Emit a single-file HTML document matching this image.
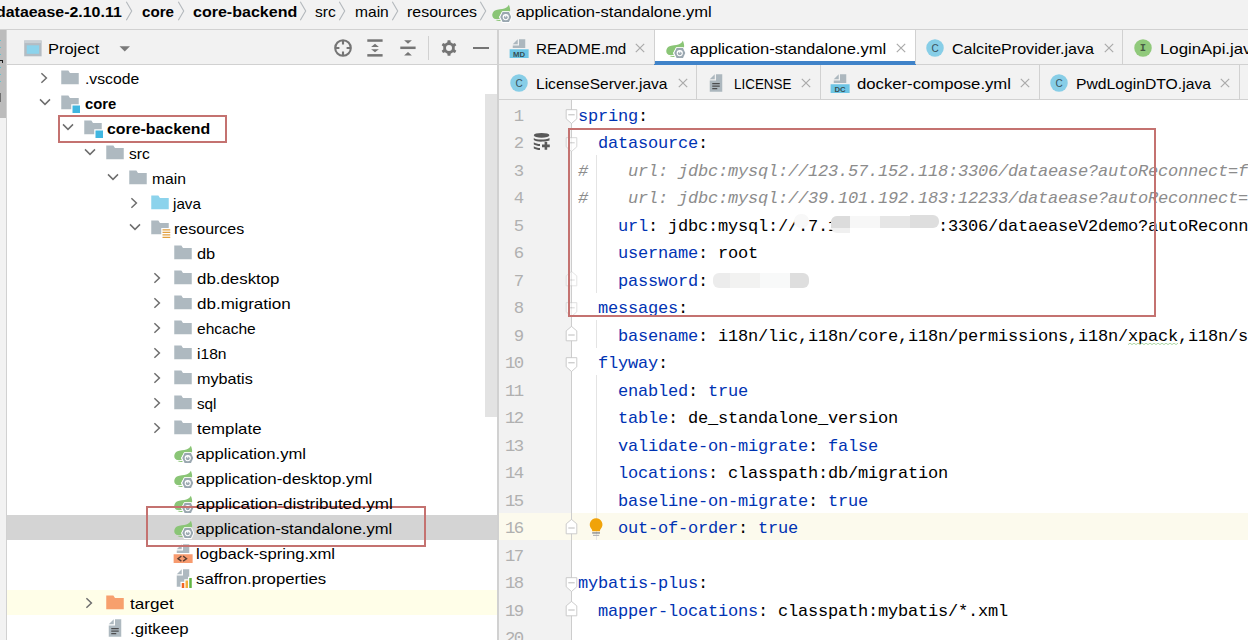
<!DOCTYPE html>
<html><head><meta charset='utf-8'><title>application-standalone.yml</title>
<style>

html,body{margin:0;padding:0}
body{width:1248px;height:640px;overflow:hidden;position:relative;background:#fff;font-family:"Liberation Sans", sans-serif;color:#000}
.a{position:absolute}
.t{position:absolute;white-space:pre;line-height:20px;height:20px;transform-origin:0 50%}
.ln{position:absolute;left:578px;white-space:pre;font-family:"Liberation Mono", monospace;font-size:17px;letter-spacing:-0.2px;line-height:27.5px;height:27.5px;color:#000}
.k{color:#0033b3}
.c{color:#8c8c8c;font-style:italic}
.no{position:absolute;left:499px;width:23.4px;letter-spacing:-1.68px;text-align:right;font-family:"Liberation Mono", monospace;font-size:17.3px;line-height:27.5px;height:27.5px;color:#b0b0b0}
svg{position:absolute;overflow:visible}

</style></head>
<body>
<div class="a" style="left:0px;top:0px;width:1248px;height:29px;background:#f2f2f2;"></div>
<div class="a" style="left:0px;top:29px;width:1248px;height:1px;background:#d1d1d1;"></div>
<div class="a" style="left:0px;top:30px;width:6px;height:610px;background:#f2f2f2;"></div>
<div class="a" style="left:0px;top:30px;width:6.4px;height:87.5px;background:#bcbcbc;"></div>
<div class="a" style="left:0px;top:40px;width:1px;height:1.2px;background:#62c3cf;"></div>
<div class="a" style="left:0px;top:47px;width:1px;height:1.2px;background:#62c3cf;"></div>
<div class="a" style="left:0px;top:54px;width:1px;height:1.2px;background:#62c3cf;"></div>
<div class="a" style="left:0px;top:66.5px;width:1px;height:1.2px;background:#62c3cf;"></div>
<div class="a" style="left:0px;top:73.5px;width:1px;height:1.2px;background:#62c3cf;"></div>
<div class="a" style="left:0px;top:81px;width:1px;height:1.2px;background:#62c3cf;"></div>
<div class="a" style="left:0px;top:60px;width:2.6px;height:1.4px;background:#1a1a1a;"></div>
<div class="a" style="left:1.6px;top:60.6px;width:1.4px;height:2.4px;background:#1a1a1a;"></div>
<div class="a" style="left:0px;top:93px;width:1.2px;height:9px;background:#6e6e6e;"></div>
<div class="a" style="left:6px;top:30px;width:1px;height:610px;background:#d1d1d1;"></div>
<div class="a" style="left:7px;top:30px;width:490px;height:34px;background:#f2f2f2;"></div>
<div class="a" style="left:7px;top:64px;width:490px;height:1px;background:#d1d1d1;"></div>
<div class="a" style="left:7px;top:65px;width:490px;height:575px;background:#fff;"></div>
<div class="a" style="left:7px;top:515px;width:490px;height:25px;background:#d4d4d4;"></div>
<div class="a" style="left:7px;top:590px;width:490px;height:25px;background:#fffee8;"></div>
<div class="a" style="left:485px;top:94px;width:12px;height:323px;background:#e3e3e3;"></div>
<div class="a" style="left:497px;top:30px;width:2px;height:610px;background:#d1d1d1;"></div>
<div class="a" style="left:499px;top:30px;width:749px;height:34px;background:#f2f2f2;"></div>
<div class="a" style="left:499px;top:64px;width:749px;height:1px;background:#d1d1d1;"></div>
<div class="a" style="left:499px;top:65px;width:749px;height:34px;background:#f2f2f2;"></div>
<div class="a" style="left:499px;top:99px;width:749px;height:1px;background:#d1d1d1;"></div>
<div class="a" style="left:654.4px;top:30px;width:261.2px;height:34px;background:#fff;"></div>
<div class="a" style="left:654.4px;top:61.2px;width:261.2px;height:4.2px;background:#4083c9;"></div>
<div class="a" style="left:654px;top:30px;width:1px;height:34px;background:#d1d1d1;"></div>
<div class="a" style="left:915px;top:30px;width:1px;height:34px;background:#d1d1d1;"></div>
<div class="a" style="left:1122px;top:30px;width:1px;height:34px;background:#d1d1d1;"></div>
<div class="a" style="left:696px;top:65px;width:1px;height:34px;background:#d1d1d1;"></div>
<div class="a" style="left:820px;top:65px;width:1px;height:34px;background:#d1d1d1;"></div>
<div class="a" style="left:1039px;top:65px;width:1px;height:34px;background:#d1d1d1;"></div>
<div class="a" style="left:1239px;top:65px;width:1px;height:34px;background:#d1d1d1;"></div>
<div class="a" style="left:499px;top:100px;width:72px;height:540px;background:#f2f2f2;"></div>
<div class="a" style="left:572px;top:100px;width:676px;height:540px;background:#fff;"></div>
<div class="a" style="left:499px;top:512.5px;width:749px;height:27.5px;background:#fcfaed;"></div>
<div class="a" style="left:571px;top:100px;width:1px;height:540px;background:#cdcdcd;"></div>
<div class="no" style="top:102.5px">1</div>
<div class="ln" style="top:102.7px"><span class="k">spring</span>:</div>
<div class="no" style="top:130.0px">2</div>
<div class="ln" style="top:130.2px">  <span class="k">datasource</span>:</div>
<div class="no" style="top:157.5px">3</div>
<div class="ln" style="top:157.7px"><span class="c">#    url: jdbc:mysql://123.57.152.118:3306/dataease?autoReconnect=f</span></div>
<div class="no" style="top:185.0px">4</div>
<div class="ln" style="top:185.2px"><span class="c">#    url: jdbc:mysql://39.101.192.183:12233/dataease?autoReconnect=</span></div>
<div class="no" style="top:212.5px">5</div>
<div class="ln" style="top:212.7px">    <span class="k">url</span>: jdbc:mysql://.7.1          :3306/dataeaseV2demo?autoReconn</div>
<div class="no" style="top:240.0px">6</div>
<div class="ln" style="top:240.2px">    <span class="k">username</span>: root</div>
<div class="no" style="top:267.5px">7</div>
<div class="ln" style="top:267.7px">    <span class="k">password</span>:</div>
<div class="no" style="top:295.0px">8</div>
<div class="ln" style="top:295.2px">  <span class="k">messages</span>:</div>
<div class="no" style="top:322.5px">9</div>
<div class="ln" style="top:322.7px">    <span class="k">basename</span>: i18n/lic,i18n/core,i18n/permissions,i18n/xpack,i18n/s</div>
<div class="no" style="top:350.0px">10</div>
<div class="ln" style="top:350.2px">  <span class="k">flyway</span>:</div>
<div class="no" style="top:377.5px">11</div>
<div class="ln" style="top:377.7px">    <span class="k">enabled</span>: <span class="k">true</span></div>
<div class="no" style="top:405.0px">12</div>
<div class="ln" style="top:405.2px">    <span class="k">table</span>: de_standalone_version</div>
<div class="no" style="top:432.5px">13</div>
<div class="ln" style="top:432.7px">    <span class="k">validate-on-migrate</span>: <span class="k">false</span></div>
<div class="no" style="top:460.0px">14</div>
<div class="ln" style="top:460.2px">    <span class="k">locations</span>: classpath:db/migration</div>
<div class="no" style="top:487.5px">15</div>
<div class="ln" style="top:487.7px">    <span class="k">baseline-on-migrate</span>: <span class="k">true</span></div>
<div class="no" style="top:515.0px">16</div>
<div class="ln" style="top:515.2px">    <span class="k">out-of-order</span>: <span class="k">true</span></div>
<div class="no" style="top:542.5px">17</div>
<div class="no" style="top:570.0px">18</div>
<div class="ln" style="top:570.2px"><span class="k">mybatis-plus</span>:</div>
<div class="no" style="top:597.5px">19</div>
<div class="ln" style="top:597.7px">  <span class="k">mapper-locations</span>: classpath:mybatis/*.xml</div>
<div class="no" style="top:625.0px">20</div>
<svg style="left:59.75px;top:67.75px" width="20" height="20" viewBox="0 0 16 16" ><polygon fill="#9AA7B0" fill-opacity=".8" points="1,13 15,13 15,4 7.985,4 6.696,2 1,2"/></svg>
<svg style="left:38.35px;top:72px" width="12" height="12" viewBox="-6 -6 12 12" ><path d="M-2.6,-4.7 L2.4,0 L-2.6,4.7" fill="none" stroke="#6e6e6e" stroke-width="1.5"/></svg>
<svg style="left:59.75px;top:92.75px" width="20" height="20" viewBox="0 0 16 16" ><path fill="#9AA7B0" fill-opacity=".8" d="M1,2 L6.696,2 L7.985,4 L15,4 L15,9 L9,9 L9,13 L1,13 Z"/><rect x="10" y="10" width="6" height="6" fill="#40B6E0"/></svg>
<svg style="left:38.95px;top:96.2px" width="12" height="12" viewBox="-6 -6 12 12" ><path d="M-5,-2.6 L0,2.4 L5,-2.6" fill="none" stroke="#6e6e6e" stroke-width="1.5"/></svg>
<svg style="left:82.75px;top:117.75px" width="20" height="20" viewBox="0 0 16 16" ><path fill="#9AA7B0" fill-opacity=".8" d="M1,2 L6.696,2 L7.985,4 L15,4 L15,9 L9,9 L9,13 L1,13 Z"/><rect x="10" y="10" width="6" height="6" fill="#40B6E0"/></svg>
<svg style="left:61.95px;top:121.2px" width="12" height="12" viewBox="-6 -6 12 12" ><path d="M-5,-2.6 L0,2.4 L5,-2.6" fill="none" stroke="#6e6e6e" stroke-width="1.5"/></svg>
<svg style="left:104.75px;top:142.75px" width="20" height="20" viewBox="0 0 16 16" ><polygon fill="#9AA7B0" fill-opacity=".8" points="1,13 15,13 15,4 7.985,4 6.696,2 1,2"/></svg>
<svg style="left:83.95px;top:146.2px" width="12" height="12" viewBox="-6 -6 12 12" ><path d="M-5,-2.6 L0,2.4 L5,-2.6" fill="none" stroke="#6e6e6e" stroke-width="1.5"/></svg>
<svg style="left:127.75px;top:167.75px" width="20" height="20" viewBox="0 0 16 16" ><polygon fill="#9AA7B0" fill-opacity=".8" points="1,13 15,13 15,4 7.985,4 6.696,2 1,2"/></svg>
<svg style="left:106.95px;top:171.2px" width="12" height="12" viewBox="-6 -6 12 12" ><path d="M-5,-2.6 L0,2.4 L5,-2.6" fill="none" stroke="#6e6e6e" stroke-width="1.5"/></svg>
<svg style="left:149.75px;top:192.75px" width="20" height="20" viewBox="0 0 16 16" ><polygon fill="#40B6E0" fill-opacity=".6" points="1,13 15,13 15,4 7.985,4 6.696,2 1,2"/></svg>
<svg style="left:128.35px;top:197px" width="12" height="12" viewBox="-6 -6 12 12" ><path d="M-2.6,-4.7 L2.4,0 L-2.6,4.7" fill="none" stroke="#6e6e6e" stroke-width="1.5"/></svg>
<svg style="left:149.75px;top:217.75px" width="20" height="20" viewBox="0 0 16 16" ><path fill="#9AA7B0" fill-opacity=".8" d="M1,2 L6.696,2 L7.985,4 L15,4 L15,8 L9,8 L9,13 L1,13 Z"/><path fill="#E2A040" d="M10,9h6.2v1h-6.2z M10,11h6.2v1h-6.2z M10,13h6.2v1h-6.2z M10,15h6.2v1h-6.2z"/></svg>
<svg style="left:128.95px;top:221.2px" width="12" height="12" viewBox="-6 -6 12 12" ><path d="M-5,-2.6 L0,2.4 L5,-2.6" fill="none" stroke="#6e6e6e" stroke-width="1.5"/></svg>
<svg style="left:172.75px;top:242.75px" width="20" height="20" viewBox="0 0 16 16" ><polygon fill="#9AA7B0" fill-opacity=".8" points="1,13 15,13 15,4 7.985,4 6.696,2 1,2"/></svg>
<svg style="left:172.75px;top:267.75px" width="20" height="20" viewBox="0 0 16 16" ><polygon fill="#9AA7B0" fill-opacity=".8" points="1,13 15,13 15,4 7.985,4 6.696,2 1,2"/></svg>
<svg style="left:151.35px;top:272px" width="12" height="12" viewBox="-6 -6 12 12" ><path d="M-2.6,-4.7 L2.4,0 L-2.6,4.7" fill="none" stroke="#6e6e6e" stroke-width="1.5"/></svg>
<svg style="left:172.75px;top:292.75px" width="20" height="20" viewBox="0 0 16 16" ><polygon fill="#9AA7B0" fill-opacity=".8" points="1,13 15,13 15,4 7.985,4 6.696,2 1,2"/></svg>
<svg style="left:151.35px;top:297px" width="12" height="12" viewBox="-6 -6 12 12" ><path d="M-2.6,-4.7 L2.4,0 L-2.6,4.7" fill="none" stroke="#6e6e6e" stroke-width="1.5"/></svg>
<svg style="left:172.75px;top:317.75px" width="20" height="20" viewBox="0 0 16 16" ><polygon fill="#9AA7B0" fill-opacity=".8" points="1,13 15,13 15,4 7.985,4 6.696,2 1,2"/></svg>
<svg style="left:151.35px;top:322px" width="12" height="12" viewBox="-6 -6 12 12" ><path d="M-2.6,-4.7 L2.4,0 L-2.6,4.7" fill="none" stroke="#6e6e6e" stroke-width="1.5"/></svg>
<svg style="left:172.75px;top:342.75px" width="20" height="20" viewBox="0 0 16 16" ><polygon fill="#9AA7B0" fill-opacity=".8" points="1,13 15,13 15,4 7.985,4 6.696,2 1,2"/></svg>
<svg style="left:151.35px;top:347px" width="12" height="12" viewBox="-6 -6 12 12" ><path d="M-2.6,-4.7 L2.4,0 L-2.6,4.7" fill="none" stroke="#6e6e6e" stroke-width="1.5"/></svg>
<svg style="left:172.75px;top:367.75px" width="20" height="20" viewBox="0 0 16 16" ><polygon fill="#9AA7B0" fill-opacity=".8" points="1,13 15,13 15,4 7.985,4 6.696,2 1,2"/></svg>
<svg style="left:151.35px;top:372px" width="12" height="12" viewBox="-6 -6 12 12" ><path d="M-2.6,-4.7 L2.4,0 L-2.6,4.7" fill="none" stroke="#6e6e6e" stroke-width="1.5"/></svg>
<svg style="left:172.75px;top:392.75px" width="20" height="20" viewBox="0 0 16 16" ><polygon fill="#9AA7B0" fill-opacity=".8" points="1,13 15,13 15,4 7.985,4 6.696,2 1,2"/></svg>
<svg style="left:151.35px;top:397px" width="12" height="12" viewBox="-6 -6 12 12" ><path d="M-2.6,-4.7 L2.4,0 L-2.6,4.7" fill="none" stroke="#6e6e6e" stroke-width="1.5"/></svg>
<svg style="left:172.75px;top:417.75px" width="20" height="20" viewBox="0 0 16 16" ><polygon fill="#9AA7B0" fill-opacity=".8" points="1,13 15,13 15,4 7.985,4 6.696,2 1,2"/></svg>
<svg style="left:151.35px;top:422px" width="12" height="12" viewBox="-6 -6 12 12" ><path d="M-2.6,-4.7 L2.4,0 L-2.6,4.7" fill="none" stroke="#6e6e6e" stroke-width="1.5"/></svg>
<svg style="left:172.75px;top:442.75px" width="20" height="20" viewBox="0 0 16 16" ><path fill="#8AC576" d="M14.3,2.1 C14.9,3.8 15.6,5.6 15.2,7.6 L9,7.6 L6.4,12 L7.2,13.4 C5.6,13.9 4,13.9 2.7,13.4 C1.2,12.6 0.8,11 1.1,9.6 C1.5,7.5 3,6.4 5,6.1 C8,5.7 10.4,5.6 12,4.6 C13,3.9 13.8,3.1 14.3,2.1 Z M3.6,14.3 C5,14.7 6.4,14.6 7.4,14.2 L7.9,15 C6.4,15.5 4.8,15.3 3.6,14.3 Z"/><path fill="#fff" stroke="#fff" stroke-width="1.5" stroke-linejoin="round" d="M9.3,8.05 H14.4 L16.2,12.05 L14.4,16.05 H9.3 L7.4,12.05 Z"/><path fill="#9AA7B0" d="M9.3,8.05 H14.4 L16.2,12.05 L14.4,16.05 H9.3 L7.4,12.05 Z"/><circle cx="11.8" cy="12.05" r="2.5" fill="#fff"/><circle cx="11.8" cy="12.2" r="1.5" fill="#9AA7B0"/><path fill="none" stroke="#fff" stroke-width="0.75" d="M11.8,9.6 V12.2"/></svg>
<svg style="left:172.75px;top:467.75px" width="20" height="20" viewBox="0 0 16 16" ><path fill="#8AC576" d="M14.3,2.1 C14.9,3.8 15.6,5.6 15.2,7.6 L9,7.6 L6.4,12 L7.2,13.4 C5.6,13.9 4,13.9 2.7,13.4 C1.2,12.6 0.8,11 1.1,9.6 C1.5,7.5 3,6.4 5,6.1 C8,5.7 10.4,5.6 12,4.6 C13,3.9 13.8,3.1 14.3,2.1 Z M3.6,14.3 C5,14.7 6.4,14.6 7.4,14.2 L7.9,15 C6.4,15.5 4.8,15.3 3.6,14.3 Z"/><path fill="#fff" stroke="#fff" stroke-width="1.5" stroke-linejoin="round" d="M9.3,8.05 H14.4 L16.2,12.05 L14.4,16.05 H9.3 L7.4,12.05 Z"/><path fill="#9AA7B0" d="M9.3,8.05 H14.4 L16.2,12.05 L14.4,16.05 H9.3 L7.4,12.05 Z"/><circle cx="11.8" cy="12.05" r="2.5" fill="#fff"/><circle cx="11.8" cy="12.2" r="1.5" fill="#9AA7B0"/><path fill="none" stroke="#fff" stroke-width="0.75" d="M11.8,9.6 V12.2"/></svg>
<svg style="left:172.75px;top:492.75px" width="20" height="20" viewBox="0 0 16 16" ><path fill="#8AC576" d="M14.3,2.1 C14.9,3.8 15.6,5.6 15.2,7.6 L9,7.6 L6.4,12 L7.2,13.4 C5.6,13.9 4,13.9 2.7,13.4 C1.2,12.6 0.8,11 1.1,9.6 C1.5,7.5 3,6.4 5,6.1 C8,5.7 10.4,5.6 12,4.6 C13,3.9 13.8,3.1 14.3,2.1 Z M3.6,14.3 C5,14.7 6.4,14.6 7.4,14.2 L7.9,15 C6.4,15.5 4.8,15.3 3.6,14.3 Z"/><path fill="#fff" stroke="#fff" stroke-width="1.5" stroke-linejoin="round" d="M9.3,8.05 H14.4 L16.2,12.05 L14.4,16.05 H9.3 L7.4,12.05 Z"/><path fill="#9AA7B0" d="M9.3,8.05 H14.4 L16.2,12.05 L14.4,16.05 H9.3 L7.4,12.05 Z"/><circle cx="11.8" cy="12.05" r="2.5" fill="#fff"/><circle cx="11.8" cy="12.2" r="1.5" fill="#9AA7B0"/><path fill="none" stroke="#fff" stroke-width="0.75" d="M11.8,9.6 V12.2"/></svg>
<svg style="left:172.75px;top:517.75px" width="20" height="20" viewBox="0 0 16 16" ><path fill="#8AC576" d="M14.3,2.1 C14.9,3.8 15.6,5.6 15.2,7.6 L9,7.6 L6.4,12 L7.2,13.4 C5.6,13.9 4,13.9 2.7,13.4 C1.2,12.6 0.8,11 1.1,9.6 C1.5,7.5 3,6.4 5,6.1 C8,5.7 10.4,5.6 12,4.6 C13,3.9 13.8,3.1 14.3,2.1 Z M3.6,14.3 C5,14.7 6.4,14.6 7.4,14.2 L7.9,15 C6.4,15.5 4.8,15.3 3.6,14.3 Z"/><path fill="#fff" stroke="#fff" stroke-width="1.5" stroke-linejoin="round" d="M9.3,8.05 H14.4 L16.2,12.05 L14.4,16.05 H9.3 L7.4,12.05 Z"/><path fill="#9AA7B0" d="M9.3,8.05 H14.4 L16.2,12.05 L14.4,16.05 H9.3 L7.4,12.05 Z"/><circle cx="11.8" cy="12.05" r="2.5" fill="#fff"/><circle cx="11.8" cy="12.2" r="1.5" fill="#9AA7B0"/><path fill="none" stroke="#fff" stroke-width="0.75" d="M11.8,9.6 V12.2"/></svg>
<svg style="left:172.75px;top:542.75px" width="20" height="20" viewBox="0 0 16 16" ><polygon fill="#9AA7B0" fill-opacity=".8" points="7,1 3,5 7,5"/><path fill="#9AA7B0" fill-opacity=".8" d="M8,1 V6 H3 V8 H13 V1 Z"/><rect x="0.5" y="9" width="15.2" height="7" fill="#F26522" fill-opacity=".65"/><path fill="none" stroke="#231F20" stroke-opacity=".75" stroke-width="1" d="M6.7,10.5 L3.9,12.5 L6.7,14.5 M8.1,10.5 L10.9,12.5 L8.1,14.5"/></svg>
<svg style="left:172.75px;top:567.75px" width="20" height="20" viewBox="0 0 16 16" ><polygon fill="#9AA7B0" fill-opacity=".8" points="7,1 3,5 7,5"/><path fill="#9AA7B0" fill-opacity=".8" d="M8,1 V6 H3 V15 H6 V11 H9 V9 H12 V7 H13 V1 Z"/><rect x="7" y="12" width="2" height="4" fill="#F26522"/><rect x="10" y="10" width="2" height="6" fill="#F4AF3D"/><rect x="13" y="8" width="2" height="8" fill="#62B543"/></svg>
<svg style="left:104.75px;top:592.75px" width="20" height="20" viewBox="0 0 16 16" ><polygon fill="#F26522" fill-opacity=".62" points="1,13 15,13 15,4 7.985,4 6.696,2 1,2"/></svg>
<svg style="left:83.35px;top:597px" width="12" height="12" viewBox="-6 -6 12 12" ><path d="M-2.6,-4.7 L2.4,0 L-2.6,4.7" fill="none" stroke="#6e6e6e" stroke-width="1.5"/></svg>
<svg style="left:104.75px;top:617.75px" width="20" height="20" viewBox="0 0 16 16" ><polygon fill="#9AA7B0" fill-opacity=".8" points="7,1 3,5 7,5"/><polygon fill="#9AA7B0" fill-opacity=".8" points="8,1 8,6 3,6 3,15 13,15 13,1"/><path fill="#231F20" fill-opacity=".7" d="M5,12h4v1H5z M5,10h6v1H5z M5,8h6v1H5z"/></svg>
<svg style="left:124.9px;top:0.3px" width="8" height="22" viewBox="-4 -11 8 22" ><path d="M-2.7,-9.2 L2.7,0 L-2.7,9.2" fill="none" stroke="#b3b8bc" stroke-width="1.1"/></svg>
<svg style="left:176.9px;top:0.3px" width="8" height="22" viewBox="-4 -11 8 22" ><path d="M-2.7,-9.2 L2.7,0 L-2.7,9.2" fill="none" stroke="#b3b8bc" stroke-width="1.1"/></svg>
<svg style="left:299px;top:0.3px" width="8" height="22" viewBox="-4 -11 8 22" ><path d="M-2.7,-9.2 L2.7,0 L-2.7,9.2" fill="none" stroke="#b3b8bc" stroke-width="1.1"/></svg>
<svg style="left:338px;top:0.3px" width="8" height="22" viewBox="-4 -11 8 22" ><path d="M-2.7,-9.2 L2.7,0 L-2.7,9.2" fill="none" stroke="#b3b8bc" stroke-width="1.1"/></svg>
<svg style="left:390.8px;top:0.3px" width="8" height="22" viewBox="-4 -11 8 22" ><path d="M-2.7,-9.2 L2.7,0 L-2.7,9.2" fill="none" stroke="#b3b8bc" stroke-width="1.1"/></svg>
<svg style="left:479px;top:0.3px" width="8" height="22" viewBox="-4 -11 8 22" ><path d="M-2.7,-9.2 L2.7,0 L-2.7,9.2" fill="none" stroke="#b3b8bc" stroke-width="1.1"/></svg>
<svg style="left:490.75px;top:2.0px" width="20" height="20" viewBox="0 0 16 16" ><path fill="#8AC576" d="M14.3,2.1 C14.9,3.8 15.6,5.6 15.2,7.6 L9,7.6 L6.4,12 L7.2,13.4 C5.6,13.9 4,13.9 2.7,13.4 C1.2,12.6 0.8,11 1.1,9.6 C1.5,7.5 3,6.4 5,6.1 C8,5.7 10.4,5.6 12,4.6 C13,3.9 13.8,3.1 14.3,2.1 Z M3.6,14.3 C5,14.7 6.4,14.6 7.4,14.2 L7.9,15 C6.4,15.5 4.8,15.3 3.6,14.3 Z"/><path fill="#fff" stroke="#fff" stroke-width="1.5" stroke-linejoin="round" d="M9.3,8.05 H14.4 L16.2,12.05 L14.4,16.05 H9.3 L7.4,12.05 Z"/><path fill="#9AA7B0" d="M9.3,8.05 H14.4 L16.2,12.05 L14.4,16.05 H9.3 L7.4,12.05 Z"/><circle cx="11.8" cy="12.05" r="2.5" fill="#fff"/><circle cx="11.8" cy="12.2" r="1.5" fill="#9AA7B0"/><path fill="none" stroke="#fff" stroke-width="0.75" d="M11.8,9.6 V12.2"/></svg>
<svg style="left:23px;top:38px" width="22" height="20" viewBox="0 0 22 20" ><rect x="1.2" y="2.5" width="17.4" height="15.8" fill="#b3bcc3"/><rect x="1.2" y="2.5" width="17.4" height="2.6" fill="#c9d0d5"/><rect x="3.7" y="7.3" width="12.4" height="8.5" fill="#8cd3ec"/></svg>
<svg style="left:118px;top:44.2px" width="14" height="10" viewBox="0 0 14 10" ><path d="M1.5,2.2 H12 L6.75,7.6 Z" fill="#7a7a7a"/></svg>
<svg style="left:333px;top:38px" width="20" height="20" viewBox="-10 -10 20 20" ><g fill="none" stroke="#757575" stroke-width="2.1"><circle r="7.8"/><path d="M0,-8 V-3.6 M0,8 V3.6 M-8,0 H-3.6 M8,0 H3.6"/></g></svg>
<svg style="left:365px;top:38px" width="20" height="20" viewBox="-10 -10 20 20" ><g fill="#757575"><rect x="-7.7" y="-8.7" width="15.3" height="2.5"/><rect x="-7.7" y="6.1" width="15.3" height="2.5"/><path d="M0,-4.3 L3.9,-1 H-3.9 Z M0,4.3 L3.9,1.2 H-3.9 Z"/></g></svg>
<svg style="left:398px;top:38px" width="20" height="20" viewBox="-10 -10 20 20" ><g fill="#757575"><rect x="-7.7" y="-1.45" width="15.3" height="2.5"/><path d="M0,-4.2 L3.9,-7.7 H-3.9 Z M0,4 L3.9,7.6 H-3.9 Z"/></g></svg>
<div class="a" style="left:428px;top:36px;width:1px;height:24px;background:#d1d1d1;"></div>
<svg style="left:439px;top:38px" width="20" height="20" viewBox="-10 -10 20 20" ><path fill="#757575" fill-rule="evenodd" d="M-1.38,-7.68 L1.38,-7.68 L1.65,-5.67 L4.08,-4.26 L5.96,-5.03 L7.34,-2.64 L5.73,-1.41 L5.73,1.41 L7.34,2.64 L5.96,5.03 L4.08,4.26 L1.65,5.67 L1.38,7.68 L-1.38,7.68 L-1.65,5.67 L-4.08,4.26 L-5.96,5.03 L-7.34,2.64 L-5.73,1.41 L-5.73,-1.41 L-7.34,-2.64 L-5.96,-5.03 L-4.08,-4.26 L-1.65,-5.67 Z M3.0,0 A3.0,3.0 0 1 0 -3.0,0 A3.0,3.0 0 1 0 3.0,0 Z"/></svg>
<div class="a" style="left:473.2px;top:46.5px;width:15.4px;height:2.6px;background:#757575;"></div>
<svg style="left:509.4px;top:38px" width="20" height="20" viewBox="0 0 16 16" ><polygon fill="#9AA7B0" fill-opacity=".8" points="7,1 3,5 7,5"/><path fill="#9AA7B0" fill-opacity=".8" d="M8,1 V6 H3 V8 H13 V1 Z"/><rect x="0.5" y="9" width="15.2" height="7" fill="#40B6E0" fill-opacity=".75"/><text x="8.1" y="15.2" text-anchor="middle" font-family="Liberation Sans, sans-serif" font-weight="700" font-size="6.2" fill="#231F20" fill-opacity=".75">MD</text></svg>
<svg style="left:665.0px;top:37.6px" width="20" height="20" viewBox="0 0 16 16" ><path fill="#8AC576" d="M14.3,2.1 C14.9,3.8 15.6,5.6 15.2,7.6 L9,7.6 L6.4,12 L7.2,13.4 C5.6,13.9 4,13.9 2.7,13.4 C1.2,12.6 0.8,11 1.1,9.6 C1.5,7.5 3,6.4 5,6.1 C8,5.7 10.4,5.6 12,4.6 C13,3.9 13.8,3.1 14.3,2.1 Z M3.6,14.3 C5,14.7 6.4,14.6 7.4,14.2 L7.9,15 C6.4,15.5 4.8,15.3 3.6,14.3 Z"/><path fill="#fff" stroke="#fff" stroke-width="1.5" stroke-linejoin="round" d="M9.3,8.05 H14.4 L16.2,12.05 L14.4,16.05 H9.3 L7.4,12.05 Z"/><path fill="#9AA7B0" d="M9.3,8.05 H14.4 L16.2,12.05 L14.4,16.05 H9.3 L7.4,12.05 Z"/><circle cx="11.8" cy="12.05" r="2.5" fill="#fff"/><circle cx="11.8" cy="12.2" r="1.5" fill="#9AA7B0"/><path fill="none" stroke="#fff" stroke-width="0.75" d="M11.8,9.6 V12.2"/></svg>
<svg style="left:925.0px;top:38px" width="20" height="20" viewBox="0 0 16 16" ><circle cx="8" cy="8" r="7" fill="#40B6E0" fill-opacity=".6"/><text x="8" y="10.8" text-anchor="middle" font-family="Liberation Sans, sans-serif" font-size="8.0" fill="#2f3f4a" stroke="#2f3f4a" stroke-width=".12" fill-opacity=".85" stroke-opacity=".85">C</text></svg>
<svg style="left:1132.8px;top:38px" width="20" height="20" viewBox="0 0 16 16" ><circle cx="8" cy="8" r="7" fill="#62B543" fill-opacity=".68"/><text x="8" y="10.6" text-anchor="middle" font-family="Liberation Mono, monospace" font-weight="700" font-size="8.4" fill="#3d4d3d" fill-opacity=".9">I</text></svg>
<svg style="left:508.9px;top:73px" width="20" height="20" viewBox="0 0 16 16" ><circle cx="8" cy="8" r="7" fill="#40B6E0" fill-opacity=".6"/><text x="8" y="10.8" text-anchor="middle" font-family="Liberation Sans, sans-serif" font-size="8.0" fill="#2f3f4a" stroke="#2f3f4a" stroke-width=".12" fill-opacity=".85" stroke-opacity=".85">C</text></svg>
<svg style="left:706.0px;top:73px" width="20" height="20" viewBox="0 0 16 16" ><polygon fill="#9AA7B0" fill-opacity=".8" points="7,1 3,5 7,5"/><polygon fill="#9AA7B0" fill-opacity=".8" points="8,1 8,6 3,6 3,15 13,15 13,1"/><path fill="#231F20" fill-opacity=".7" d="M5,12h4v1H5z M5,10h6v1H5z M5,8h6v1H5z"/></svg>
<svg style="left:830.4px;top:73px" width="20" height="20" viewBox="0 0 16 16" ><polygon fill="#9AA7B0" fill-opacity=".8" points="7,1 3,5 7,5"/><path fill="#9AA7B0" fill-opacity=".8" d="M8,1 V6 H3 V8 H13 V1 Z"/><rect x="0.5" y="9" width="15.2" height="7" fill="#40B6E0" fill-opacity=".75"/><text x="8.1" y="15.2" text-anchor="middle" font-family="Liberation Sans, sans-serif" font-weight="700" font-size="6.2" fill="#231F20" fill-opacity=".75">DC</text></svg>
<svg style="left:1049.0px;top:73px" width="20" height="20" viewBox="0 0 16 16" ><circle cx="8" cy="8" r="7" fill="#40B6E0" fill-opacity=".6"/><text x="8" y="10.8" text-anchor="middle" font-family="Liberation Sans, sans-serif" font-size="8.0" fill="#2f3f4a" stroke="#2f3f4a" stroke-width=".12" fill-opacity=".85" stroke-opacity=".85">C</text></svg>
<svg style="left:634px;top:42.2px" width="12" height="12" viewBox="-6 -6 12 12" ><path d="M-4.2,-4.2 L4.2,4.2 M4.2,-4.2 L-4.2,4.2" fill="none" stroke="#aaaaaa" stroke-width="1.2"/></svg>
<svg style="left:895px;top:42.2px" width="12" height="12" viewBox="-6 -6 12 12" ><path d="M-4.2,-4.2 L4.2,4.2 M4.2,-4.2 L-4.2,4.2" fill="none" stroke="#aaaaaa" stroke-width="1.2"/></svg>
<svg style="left:1103px;top:42.2px" width="12" height="12" viewBox="-6 -6 12 12" ><path d="M-4.2,-4.2 L4.2,4.2 M4.2,-4.2 L-4.2,4.2" fill="none" stroke="#aaaaaa" stroke-width="1.2"/></svg>
<svg style="left:677px;top:77.2px" width="12" height="12" viewBox="-6 -6 12 12" ><path d="M-4.2,-4.2 L4.2,4.2 M4.2,-4.2 L-4.2,4.2" fill="none" stroke="#aaaaaa" stroke-width="1.2"/></svg>
<svg style="left:799.8px;top:77.2px" width="12" height="12" viewBox="-6 -6 12 12" ><path d="M-4.2,-4.2 L4.2,4.2 M4.2,-4.2 L-4.2,4.2" fill="none" stroke="#aaaaaa" stroke-width="1.2"/></svg>
<svg style="left:1019px;top:77.2px" width="12" height="12" viewBox="-6 -6 12 12" ><path d="M-4.2,-4.2 L4.2,4.2 M4.2,-4.2 L-4.2,4.2" fill="none" stroke="#aaaaaa" stroke-width="1.2"/></svg>
<svg style="left:1219px;top:77.2px" width="12" height="12" viewBox="-6 -6 12 12" ><path d="M-4.2,-4.2 L4.2,4.2 M4.2,-4.2 L-4.2,4.2" fill="none" stroke="#aaaaaa" stroke-width="1.2"/></svg>
<div class="a" style="left:596px;top:155.0px;width:1px;height:137.5px;background:#e4e4e4;"></div>
<div class="a" style="left:596px;top:320.0px;width:1px;height:27.5px;background:#e4e4e4;"></div>
<div class="a" style="left:596px;top:375.0px;width:1px;height:165.0px;background:#e4e4e4;"></div>
<svg style="left:565px;top:108.0px" width="13" height="17" viewBox="-6.5 0 13 17" ><g opacity="1"><path d="M-5.3,1.7 H5.3 V10.8 L0,15.5 L-5.3,10.8 Z" fill="#fff" stroke="#c6c6c6" stroke-width=".9"/><path d="M-3.2,6.8 H3.2" stroke="#b4b4b4" stroke-width=".9"/></g></svg>
<svg style="left:565px;top:135.5px" width="13" height="17" viewBox="-6.5 0 13 17" ><g opacity="0.75"><path d="M-5.3,1.7 H5.3 V10.8 L0,15.5 L-5.3,10.8 Z" fill="#fff" stroke="#c6c6c6" stroke-width=".9"/><path d="M-3.2,6.8 H3.2" stroke="#b4b4b4" stroke-width=".9"/></g></svg>
<svg style="left:565px;top:270.0px" width="13" height="17" viewBox="-6.5 0 13 17" ><g opacity="0.5"><path d="M-5.3,15.8 H5.3 V5.9 L0,1.4 L-5.3,5.9 Z" fill="#fff" stroke="#c6c6c6" stroke-width=".9"/><path d="M-3.2,10 H3.2" stroke="#b4b4b4" stroke-width=".9"/></g></svg>
<svg style="left:565px;top:300.5px" width="13" height="17" viewBox="-6.5 0 13 17" ><g opacity="0.6"><path d="M-5.3,1.7 H5.3 V10.8 L0,15.5 L-5.3,10.8 Z" fill="#fff" stroke="#c6c6c6" stroke-width=".9"/><path d="M-3.2,6.8 H3.2" stroke="#b4b4b4" stroke-width=".9"/></g></svg>
<svg style="left:565px;top:325.0px" width="13" height="17" viewBox="-6.5 0 13 17" ><g opacity="1"><path d="M-5.3,15.8 H5.3 V5.9 L0,1.4 L-5.3,5.9 Z" fill="#fff" stroke="#c6c6c6" stroke-width=".9"/><path d="M-3.2,10 H3.2" stroke="#b4b4b4" stroke-width=".9"/></g></svg>
<svg style="left:565px;top:355.5px" width="13" height="17" viewBox="-6.5 0 13 17" ><g opacity="1"><path d="M-5.3,1.7 H5.3 V10.8 L0,15.5 L-5.3,10.8 Z" fill="#fff" stroke="#c6c6c6" stroke-width=".9"/><path d="M-3.2,6.8 H3.2" stroke="#b4b4b4" stroke-width=".9"/></g></svg>
<svg style="left:565px;top:517.5px" width="13" height="17" viewBox="-6.5 0 13 17" ><g opacity="1"><path d="M-5.3,15.8 H5.3 V5.9 L0,1.4 L-5.3,5.9 Z" fill="#fff" stroke="#c6c6c6" stroke-width=".9"/><path d="M-3.2,10 H3.2" stroke="#b4b4b4" stroke-width=".9"/></g></svg>
<svg style="left:565px;top:575.5px" width="13" height="17" viewBox="-6.5 0 13 17" ><g opacity="1"><path d="M-5.3,1.7 H5.3 V10.8 L0,15.5 L-5.3,10.8 Z" fill="#fff" stroke="#c6c6c6" stroke-width=".9"/><path d="M-3.2,6.8 H3.2" stroke="#b4b4b4" stroke-width=".9"/></g></svg>
<svg style="left:565px;top:600.0px" width="13" height="17" viewBox="-6.5 0 13 17" ><g opacity="1"><path d="M-5.3,15.8 H5.3 V5.9 L0,1.4 L-5.3,5.9 Z" fill="#fff" stroke="#c6c6c6" stroke-width=".9"/><path d="M-3.2,10 H3.2" stroke="#b4b4b4" stroke-width=".9"/></g></svg>
<svg style="left:532px;top:132px" width="20" height="20" viewBox="0 0 20 20" ><g fill="#595959"><ellipse cx="9.6" cy="3.3" rx="7.8" ry="2.4"/><path d="M1.8,6 C4,8 14,8 17.5,6 V8.4 C15,9.4 12,9.6 11,9.6 V9.6 H10.5 C7,9.8 3.5,9.2 1.8,8 Z"/><path d="M1.8,10.2 C3,11.3 6,11.9 8,12 V14 C6,13.9 3,13.3 1.8,12.4 Z"/><path d="M1.8,14.3 C3,15.4 6,16 8,16.1 V18.1 C6,18 3,17.4 1.8,16.5 Z"/><path d="M12.6,10 H15.2 V12.6 H17.8 V15.2 H15.2 V17.8 H12.6 V15.2 H10 V12.6 H12.6 Z"/></g></svg>
<svg style="left:586px;top:514.5px" width="20" height="24" viewBox="0 0 20 24" ><path fill="#F0A30A" d="M10.1,3.3 a6.3,6.3 0 0 1 4.6,10.6 c-0.6,0.7 -0.7,1.4 -0.7,2.4 H6.2 c0,-1 -0.1,-1.7 -0.7,-2.4 A6.3,6.3 0 0 1 10.1,3.3 Z"/><rect x="6.2" y="17.4" width="7.8" height="1.1" fill="#6e6e6e"/><rect x="7" y="19.8" width="6.2" height="1.1" fill="#b0b0b0"/></svg>
<div class="a" style="left:794px;top:214px;width:15.200000000000045px;height:14px;background:#f8f8f8;border-radius:7px"></div>
<div class="a" style="left:831.2px;top:215.8px;width:18.799999999999955px;height:17.19999999999999px;background:#f0f0f0;border-radius:6px 0 0 6px"></div>
<div class="a" style="left:831.2px;top:215.8px;width:18.799999999999955px;height:12.0px;background:#dcdcdc;border-radius:6px 0 0 0"></div>
<div class="a" style="left:850px;top:215.8px;width:29.5px;height:12.0px;background:#f7f7f7;border-radius:0"></div>
<div class="a" style="left:879.5px;top:215.8px;width:30.299999999999955px;height:12.0px;background:#e6e6e6;border-radius:0"></div>
<div class="a" style="left:909.8px;top:215.4px;width:29.600000000000023px;height:12.400000000000006px;background:#dedede;border-radius:0 6px 6px 0"></div>
<div class="a" style="left:713px;top:273px;width:17px;height:15px;background:#ececec;border-radius:6px 0 0 6px"></div>
<div class="a" style="left:730px;top:273px;width:30px;height:15px;background:#f2f2f1;border-radius:0"></div>
<div class="a" style="left:760px;top:273px;width:30px;height:15px;background:#f8f9f9;border-radius:0"></div>
<div class="a" style="left:790px;top:273px;width:18.799999999999955px;height:15px;background:#dedede;border-radius:0 6px 6px 0"></div>
<svg style="left:0px;top:0px" width="1248" height="640" viewBox="0 0 1248 640" ><polyline points="1128,344.6 1130,343.2 1132,344.6 1134,343.2 1136,344.6 1138,343.2 1140,344.6 1142,343.2 1144,344.6 1146,343.2 1148,344.6 1150,343.2 1152,344.6 1154,343.2 1156,344.6 1158,343.2 1160,344.6 1162,343.2 1164,344.6 1166,343.2 1168,344.6 1170,343.2 1172,344.6 1174,343.2 1176,344.6 1178,343.2" fill="none" stroke="#a6d19c" stroke-width="0.9"/></svg>
<div class="a" style="left:58px;top:114.5px;width:164.5px;height:24.5px;border:2px solid #c47270"></div>
<div class="a" style="left:146px;top:506px;width:276px;height:37px;border:2px solid #c47270"></div>
<div class="a" style="left:568px;top:128px;width:584px;height:185px;border:2px solid #c47270"></div>
<span class="t" style="left:-4px;top:1.8px;font-size:15px;transform:scaleX(1.0617);font-weight:700;">dataease-2.10.11</span>
<span class="t" style="left:141.5px;top:1.8px;font-size:15px;transform:scaleX(1.0099);font-weight:700;">core</span>
<span class="t" style="left:193.25px;top:1.8px;font-size:15px;transform:scaleX(1.0687);font-weight:700;">core-backend</span>
<span class="t" style="left:315px;top:1.8px;font-size:15px;transform:scaleX(1.0375);">src</span>
<span class="t" style="left:354.5px;top:1.8px;font-size:15px;transform:scaleX(1.0380);">main</span>
<span class="t" style="left:406.5px;top:1.8px;font-size:15px;transform:scaleX(1.0629);">resources</span>
<span class="t" style="left:515.75px;top:1.8px;font-size:15px;transform:scaleX(1.1021);">application-standalone.yml</span>
<span class="t" style="left:48.25px;top:38.8px;font-size:15px;transform:scaleX(1.0977);">Project</span>
<span class="t" style="left:85px;top:69.05px;font-size:15px;transform:scaleX(1.0493);">.vscode</span>
<span class="t" style="left:85px;top:94.05px;font-size:15px;transform:scaleX(0.9862);font-weight:700;">core</span>
<span class="t" style="left:106.75px;top:119.05px;font-size:15px;transform:scaleX(1.0585);font-weight:700;">core-backend</span>
<span class="t" style="left:129.25px;top:144.05px;font-size:15px;transform:scaleX(1.0375);">src</span>
<span class="t" style="left:151.5px;top:169.05px;font-size:15px;transform:scaleX(1.0457);">main</span>
<span class="t" style="left:173.25px;top:194.05px;font-size:15px;transform:scaleX(1.0170);">java</span>
<span class="t" style="left:174.25px;top:219.05px;font-size:15px;transform:scaleX(1.0667);">resources</span>
<span class="t" style="left:196.75px;top:244.05px;font-size:15px;transform:scaleX(1.0936);">db</span>
<span class="t" style="left:196.75px;top:269.05px;font-size:15px;transform:scaleX(1.1241);">db.desktop</span>
<span class="t" style="left:196.75px;top:294.05px;font-size:15px;transform:scaleX(1.1357);">db.migration</span>
<span class="t" style="left:196.75px;top:319.05px;font-size:15px;transform:scaleX(1.0358);">ehcache</span>
<span class="t" style="left:196.75px;top:344.05px;font-size:15px;transform:scaleX(1.0402);">i18n</span>
<span class="t" style="left:196.75px;top:369.05px;font-size:15px;transform:scaleX(1.0786);">mybatis</span>
<span class="t" style="left:196.75px;top:394.05px;font-size:15px;transform:scaleX(1.0163);">sql</span>
<span class="t" style="left:196.75px;top:419.05px;font-size:15px;transform:scaleX(1.1208);">template</span>
<span class="t" style="left:196.25px;top:444.05px;font-size:15px;transform:scaleX(1.1087);">application.yml</span>
<span class="t" style="left:196.25px;top:469.05px;font-size:15px;transform:scaleX(1.1244);">application-desktop.yml</span>
<span class="t" style="left:196.25px;top:494.05px;font-size:15px;transform:scaleX(1.1345);">application-distributed.yml</span>
<span class="t" style="left:196.25px;top:519.05px;font-size:15px;transform:scaleX(1.1050);">application-standalone.yml</span>
<span class="t" style="left:196.25px;top:544.05px;font-size:15px;transform:scaleX(1.1120);">logback-spring.xml</span>
<span class="t" style="left:196.25px;top:569.05px;font-size:15px;transform:scaleX(1.1183);">saffron.properties</span>
<span class="t" style="left:129.7px;top:594.05px;font-size:15px;transform:scaleX(1.1392);">target</span>
<span class="t" style="left:129.7px;top:619.05px;font-size:15px;transform:scaleX(1.1171);">.gitkeep</span>
<span class="t" style="left:535.75px;top:38.8px;font-size:15px;transform:scaleX(1.0119);">README.md</span>
<span class="t" style="left:690.25px;top:38.8px;font-size:15px;transform:scaleX(1.1050);">application-standalone.yml</span>
<span class="t" style="left:951.5px;top:38.8px;font-size:15px;transform:scaleX(1.0712);">CalciteProvider.java</span>
<span class="t" style="left:1159.9px;top:38.8px;font-size:15px;transform:scaleX(1.1196);">LoginApi.java</span>
<span class="t" style="left:535.75px;top:73.8px;font-size:15px;transform:scaleX(1.0375);">LicenseServer.java</span>
<span class="t" style="left:734px;top:73.8px;font-size:15px;transform:scaleX(0.8956);">LICENSE</span>
<span class="t" style="left:856.5px;top:73.8px;font-size:15px;transform:scaleX(1.1128);">docker-compose.yml</span>
<span class="t" style="left:1075.5px;top:73.8px;font-size:15px;transform:scaleX(1.0468);">PwdLoginDTO.java</span>
</body></html>
